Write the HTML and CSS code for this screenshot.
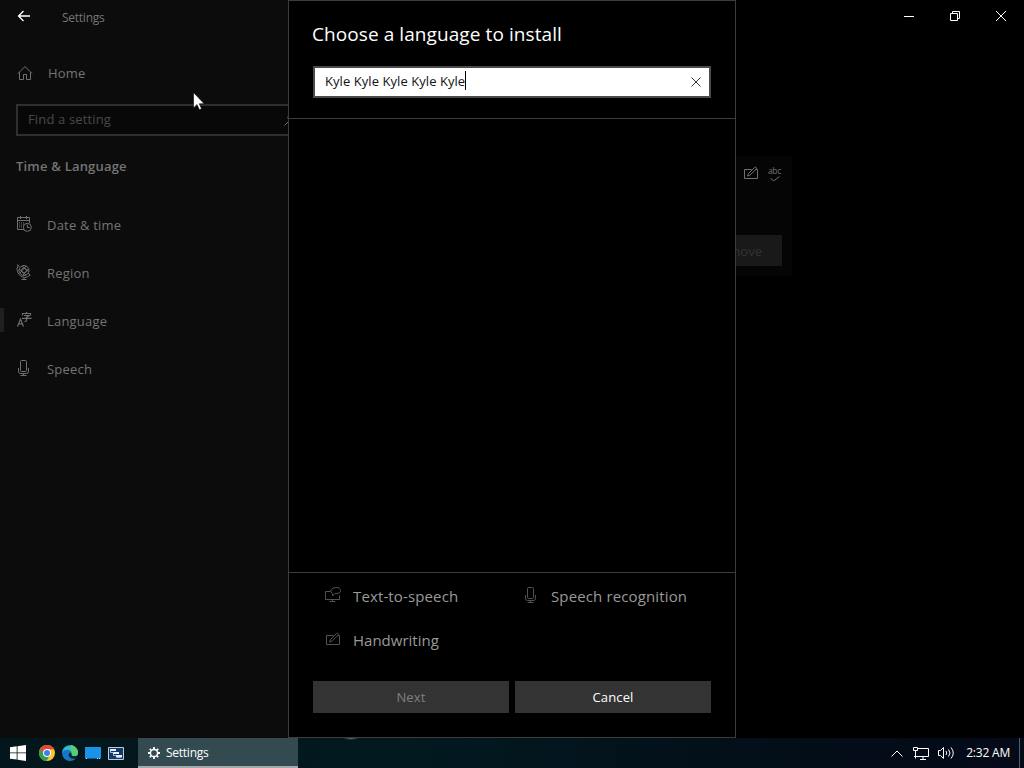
FILE: index.html
```html
<!DOCTYPE html>
<html lang="en">
<head>
    <meta charset="UTF-8">
    <meta name="viewport" content="width=device-width, initial-scale=1.0">
    <title>Settings</title>
    <link rel="stylesheet" href="styles.css">
</head>
<body>

<!-- shared icons -->
<svg class="defs" width="0" height="0">
    <symbol id="mic" viewBox="0 0 16 16">
        <path d="M4.500 1.500q0-1 1-1h4q1 0 1 1v9q0 1-1 1h-4q-1 0-1-1zM2.500 8v3.500q0 2 2 2h6q2 0 2-2V8M7.500 13.500v2M4.500 15.500h6"/>
    </symbol>
    <symbol id="pen" viewBox="0 0 16 16">
        <path d="M8.500 4.500h-7v9h13v-9h-2M4.500 11l1-2.500 6-6q1-.8 1.700 0t0 1.500l-6 6z"/>
    </symbol>
</svg>

<div class="window">
    <div class="sidebar">
        <div class="titlebar">
            <svg class="back" width="14" height="12" viewBox="0 0 14 12"><path d="M13 6H1.500M6.500 1l-5 5 5 5"/></svg>
            <span class="title">Settings</span>
        </div>
        <div class="home">
            <svg class="icon" width="16" height="16" viewBox="0 0 16 16"><path d="M1 8.500L8 1.500l7 7M2.500 7v7.500h4v-5h3v5h4V7"/></svg>
            <span class="home-text">Home</span>
        </div>
        <div class="search">
            <span class="search-text">Find a setting</span>
            <svg class="icon" width="14" height="14" viewBox="0 0 14 14"><circle cx="8.500" cy="5.500" r="4.500"/><path d="M5.300 8.700L.5 13.500"/></svg>
        </div>
        <div class="category"><span>Time &amp; Language</span></div>
        <div class="nav">
            <div class="nav-item">
                <svg class="icon" width="16" height="16" viewBox="0 0 16 16"><path d="M8 13.500H1.500v-12h12V7M1.500 4.500h12M4.500 0v3M10.500 0v3"/><path d="M3 7h6M3 9h5M3 11h4" stroke-dasharray="1 1"/><circle cx="11.300" cy="11.300" r="4"/><path d="M11.300 8.500v3h2.500"/></svg>
                <span class="date-text">Date &amp; time</span>
            </div>
            <div class="nav-item">
                <svg class="icon" width="16" height="16" viewBox="0 0 16 16"><circle cx="8" cy="6.500" r="5"/><circle cx="8" cy="6.500" r="2.500"/><path d="M3 5l7 6M6 2l7 6M4 9l6-7M7 11l5-6M2.500 1Q-.5 4.500 2 9t6.500 4.500q3 0 5.500-2.500M1 .5l2.500 2M12 9l2.500 2.500M8 13.500v2M5.500 15.500h5"/></svg>
                <span class="region-text">Region</span>
            </div>
            <div class="nav-item selected">
                <svg class="icon" width="16" height="16" viewBox="0 0 16 16"><path stroke-width="1.200" d="M1.500 14.500L4.500 7l3 7.500M2.500 11.800h4"/><path stroke-width="1.200" d="M10.500 0v1.500M6.500 3.500v-2h8v2M8 3.500h5l-2.500 2v3q0 1-2 1M6 6.300h9.500"/></svg>
                <span class="language-text">Language</span>
            </div>
            <div class="nav-item">
                <svg class="icon" width="16" height="16"><use href="#mic"/></svg>
                <span class="speech-text">Speech</span>
            </div>
        </div>
    </div>

    <div class="main">
        <div class="controls">
            <svg width="46" height="32" viewBox="0 0 46 32"><path d="M18 16.500h10"/></svg>
            <svg width="46" height="32" viewBox="0 0 46 32"><path d="M18.500 13.500h7v7h-7zM20.500 13.500v-2h7v7h-2"/></svg>
            <svg width="46" height="32" viewBox="0 0 46 32"><path d="M18 11l10 10M28 11L18 21"/></svg>
        </div>
        <div class="card">
            <div class="features">
                <svg class="icon" width="16" height="16"><use href="#pen"/></svg>
                <div class="spell"><span>abc</span><svg class="icon" width="10" height="6" viewBox="0 0 10 6"><path d="M.5 2l3 3L9.500.5"/></svg></div>
            </div>
            <div class="remove"><span>Remove</span></div>
        </div>
    </div>

    <div class="dialog">
        <div class="dialog-head">
            <div class="dialog-title"><span>Choose a language to install</span></div>
            <div class="input">
                <span class="input-text">Kyle Kyle Kyle Kyle Kyle</span><span class="caret"></span>
                <svg class="clear" width="10" height="10" viewBox="0 0 10 10"><path d="M.5.5l9 9M9.500.5l-9 9"/></svg>
            </div>
        </div>
        <div class="results"></div>
        <div class="dialog-foot">
            <div class="legend">
                <div class="legend-item">
                    <svg class="icon" width="16" height="16" viewBox="0 0 16 16"><path d="M5.500 4.500h-5v8h14v-4M7.500 12.500v2M4.500 14.500h6M7.500 6.500q-2.500-1.500-1.500-3.500 1.500-2.500 5-2.500 4.500 0 4.500 3t-4.500 3H10L7.500 9z"/></svg>
                    <span class="tts-text">Text-to-speech</span>
                </div>
                <div class="legend-item">
                    <svg class="icon" width="16" height="16"><use href="#mic"/></svg>
                    <span class="recognition-text">Speech recognition</span>
                </div>
                <div class="legend-item">
                    <svg class="icon" width="16" height="16"><use href="#pen"/></svg>
                    <span class="handwriting-text">Handwriting</span>
                </div>
            </div>
            <div class="actions">
                <button class="button" disabled><span class="next-text">Next</span></button>
                <button class="button"><span class="cancel-text">Cancel</span></button>
            </div>
        </div>
    </div>
</div>

<div class="taskbar">
    <div class="launch">
        <svg width="16" height="16" viewBox="0 0 16 16" fill="#fff"><path d="M0 2.300L6.700 1.300v6.200H0zM7.500 1.200L16 0v7.500H7.500zM0 8.300h6.700v6.300L0 13.700zM7.500 8.300H16V16l-8.500-1.300z"/></svg>
        <svg width="16" height="16" viewBox="0 0 16 16"><circle cx="8" cy="8" r="8" fill="#f5c62e"/><path d="M1.100 4A8 8 0 0 1 15 4.200H8L5 10z" fill="#e2473a"/><path d="M1.100 4A8 8 0 0 0 7.500 16l3.500-6-6-1z" fill="#2f9e50"/><circle cx="8" cy="8" r="4" fill="#fff"/><circle cx="8" cy="8" r="3" fill="#3f7fe8"/></svg>
        <svg width="16" height="16" viewBox="0 0 16 16"><circle cx="8" cy="8" r="8" fill="#1677c8"/><path d="M.2 7A8 8 0 0 1 16 7.500q0 3.500-4 3.500-3 0-2.500-2 .5-3-2.500-4Q3 4 .2 7z" fill="#36bdc6"/><path d="M9 .1A8 8 0 0 1 16 7.500q0 3.500-4 3.500-3 0-2.500-2 1-3-1-5z" fill="#58ce70"/><path d="M9.500 9q-.5 2 2.500 2.300 2 .2 3.500-.8-.5 2-2 3.200Q9 14.500 7 11.500 6 8.500 8.500 7.500q1.200.3 1 1.500z" fill="#06242c"/></svg>
        <svg width="16" height="12" viewBox="0 0 16 12"><path fill="#1992e8" d="M0 0h16v12H0z"/><path stroke="#0c5994" d="M0 11.500h16"/><path stroke="#b9e5ff" d="M1 11.500h1M12 11.500h3" stroke-dasharray="1 1"/></svg>
        <svg width="16" height="13" viewBox="0 0 16 13"><path fill="#143765" stroke="#b8cce0" d="M.5.5h15v12H.5z"/><path fill="#e4effb" d="M2 2h6v2H2zM5 5h6v2H5zM8 8h6v2H8z"/><path fill="none" stroke="#9fb8d3" d="M2.500 4v1.500h3M5.500 7v1.500h3M8.500 10v.5h5"/></svg>
    </div>
    <div class="task">
        <svg width="12" height="12" viewBox="0 0 12 12" fill="none" stroke="#fff"><circle cx="6" cy="6" r="3.600" stroke-width="1.500"/><path stroke-width="1.800" d="M6 0v2M6 10v2M0 6h2M10 6h2M1.800 1.800l1.400 1.400M8.800 8.800l1.400 1.400M1.800 10.200l1.400-1.400M8.800 3.200l1.400-1.400"/></svg>
        <span class="task-text">Settings</span>
    </div>
    <div class="tray">
        <svg width="12" height="7" viewBox="0 0 12 7"><path d="M.5 6.500L6 1l5.500 5.500"/></svg>
        <svg width="17" height="14" viewBox="0 0 17 14"><path d="M6 2.500h10.500v8H5M11 10.500v3M8 13.500h6M1.500 1.500h4v3h-4zM3.500 4.500v8M2 10.500h3"/></svg>
        <svg width="17" height="14" viewBox="0 0 17 14"><path d="M.5 4.500h2l3-3v11l-3-3h-2zM8 5q1.500 2 0 4M10.500 3.500q3 3.500 0 7M13 1.500q4.500 5.500 0 11"/></svg>
        <span class="clock">2:32 AM</span>
        <span class="show-desktop"></span>
    </div>
</div>

<svg class="cursor" width="12" height="19" viewBox="0 0 12 19"><path fill="#fff" stroke="#000" stroke-width=".6" d="M.5.5v15.500l3.500-3.400 2.300 5.200 2.300-1-2.300-5h4.900z"/></svg>

</body>
</html>
```

FILE: styles.css
```css
* {
    box-sizing: border-box;
}

body {
    margin: 0;
    width: 1024px;
    height: 768px;
    overflow: hidden;
    background-color: #000;
    color: #747474;
    font-family: "Open Sans", "Noto Sans", sans-serif;
    font-size: 13px;
    line-height: 20px;
    white-space: nowrap;
}

svg {
    display: block;
    flex: none;
}

.defs {
    position: absolute;
}

.icon {
    fill: none;
    stroke: #707070;
}

.window {
    position: relative;
    display: flex;
    height: 738px;
}

.sidebar {
    width: 320px;
    background-color: #0c0c0c;
}

.titlebar {
    display: flex;
    align-items: center;
    height: 32px;
    padding-left: 17px;
    gap: 31px;
}

.back {
    fill: none;
    stroke: #fff;
    stroke-width: 1.3;
}

.title {
    padding-top: 3px;
    font-size: 12px;
    letter-spacing: -0.25px;
}

.home {
    display: flex;
    align-items: center;
    gap: 15px;
    height: 48px;
    margin-top: 17px;
    padding-left: 17px;
}

.home-text {
    letter-spacing: 0.2px;
}

.search {
    display: flex;
    align-items: center;
    justify-content: space-between;
    width: 288px;
    height: 32px;
    margin: 7px 0 0 16px;
    padding: 0 4px 2px 10px;
    border: 2px solid #2f2f2f;
    background-color: #080808;
    color: #484848;
}

.search-text {
    letter-spacing: 0.15px;
}

.category {
    margin: 20px 0 0 16px;
    font-weight: 600;
    letter-spacing: 0.2px;
}

.nav {
    margin-top: 25px;
    letter-spacing: 0.2px;
}

.nav-item {
    display: flex;
    align-items: center;
    gap: 15px;
    height: 48px;
    padding-left: 16px;
}

.nav-item .icon {
    margin-bottom: 2px;
}

.selected::before {
    content: "";
    width: 4px;
    height: 24px;
    margin: 0 -3px 2px -16px;
    background-color: #202020;
}

.main {
    flex: 1;
}

.controls {
    display: flex;
    justify-content: flex-end;
    fill: none;
    stroke: #fff;
}

.card {
    display: flex;
    flex-direction: column;
    align-items: flex-end;
    justify-content: space-between;
    width: 472px;
    height: 120px;
    margin-top: 124px;
    padding: 9px 10px;
    background-color: #050505;
}

.features {
    display: flex;
    gap: 8px;
}

.spell {
    display: flex;
    flex-direction: column;
    align-items: center;
    width: 15px;
    padding-top: 1px;
    font-size: 8.5px;
    letter-spacing: -0.3px;
    line-height: 10px;
}

.remove {
    width: 96px;
    height: 31px;
    margin-bottom: 1px;
    padding: 6px 20px;
    background-color: #191919;
    color: #333;
    text-align: right;
}

.dialog {
    position: absolute;
    left: 288px;
    top: 0;
    display: flex;
    flex-direction: column;
    width: 448px;
    height: 738px;
    border: 1px solid #3c3c3c;
    background-color: #000;
}

.dialog-head {
    height: 118px;
    padding: 19px 24px 0;
    border-bottom: 1px solid #3c3c3c;
}

.dialog-title {
    height: 46px;
    margin-left: -1px;
    color: #fff;
    font-size: 19px;
    letter-spacing: 0.08px;
    line-height: 28px;
}

.input {
    display: flex;
    align-items: center;
    height: 32px;
    padding: 0 8px 0 10px;
    border: 2px solid #4b4b4b;
    background-color: #fff;
    color: #111;
}

.input-text {
    padding-bottom: 3px;
    letter-spacing: 0.06px;
}

.caret {
    width: 1px;
    height: 19px;
    margin-bottom: 3px;
    background-color: #000;
}

.clear {
    margin-left: auto;
    fill: none;
    stroke: #333;
}

.results {
    flex: 1;
}

.dialog-foot {
    height: 165px;
    padding: 0 24px;
    border-top: 1px solid #3c3c3c;
}

.legend {
    display: grid;
    grid-template-columns: 198px 1fr;
    grid-auto-rows: 44px;
    height: 108px;
    padding: 1px 0 0 12px;
    color: #999;
    font-size: 15px;
    letter-spacing: 0.13px;
}

.legend-item {
    display: flex;
    align-items: center;
    gap: 12px;
}

.legend .icon {
    margin-bottom: 3px;
    stroke: #525252;
}

.handwriting-text {
    letter-spacing: 0;
}

.actions {
    display: grid;
    grid-template-columns: 1fr 1fr;
    gap: 6px;
}

.button {
    height: 32px;
    padding: 0;
    border: none;
    background-color: #333;
    color: #fff;
    font-family: inherit;
    font-size: 13px;
    letter-spacing: 0.15px;
}

.button:disabled {
    color: #808080;
}

.taskbar {
    display: flex;
    height: 30px;
    background:
        radial-gradient(ellipse 8px 2px at 351px 0, #65747c, transparent),
        linear-gradient(90deg, #03161b, #021920 40%, #030d18 80%, #050a18);
    color: #fff;
    font-size: 12px;
}

.launch {
    display: flex;
    align-items: center;
    gap: 7px;
    width: 138px;
    padding-left: 10px;
}

.launch svg:first-child {
    margin-right: 6px;
}

.task {
    display: flex;
    align-items: center;
    gap: 6px;
    width: 160px;
    padding: 2px 0 0 10px;
    border-bottom: 2px solid #a3a9ab;
    background-color: #334b50;
}

.task-text {
    letter-spacing: -0.25px;
}

.tray {
    display: flex;
    align-items: center;
    gap: 9px;
    margin-left: auto;
}

.tray svg {
    fill: none;
    stroke: #fff;
}

.clock {
    margin-left: 2px;
    letter-spacing: -0.2px;
}

.show-desktop {
    width: 5px;
    height: 30px;
    border-left: 1px solid #53606b;
}

.cursor {
    position: absolute;
    left: 193px;
    top: 92px;
}
```
